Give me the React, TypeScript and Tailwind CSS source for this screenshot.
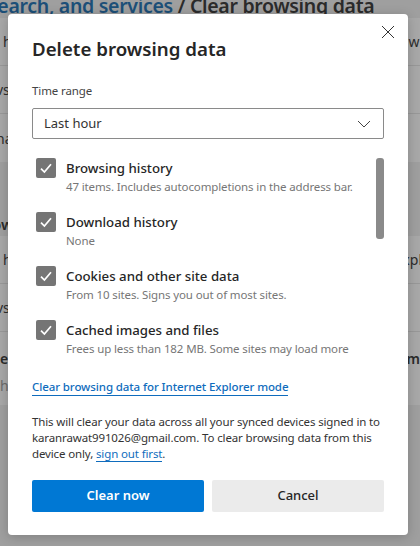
import React from "react";

const font = "font-['Noto_Sans','Open_Sans',sans-serif]";

function Check({ title, sub }: { title: string; sub: string }) {
  return (
    <div className="flex h-[54px] items-start pl-[4px]">
      <div className="mt-[8px] flex h-[20px] w-[20px] items-center justify-center rounded-[2px] bg-[#757575]">
        <svg width="14" height="14" viewBox="0 0 14 14" fill="none">
          <path d="M2 7.6 L5.4 11 L12 3.2" stroke="#fff" strokeWidth="1.7" />
        </svg>
      </div>
      <div className="ml-[10px]">
        <div className="mt-[8px] text-[13.25px] leading-[20px] font-medium text-[#262626]">{title}</div>
        <div className="mt-[1px] whitespace-nowrap text-[11.5px] leading-[16px] tracking-[-0.13px] text-[#767676]">{sub}</div>
      </div>
    </div>
  );
}

function Row({ left, border }: { left: string; border?: boolean }) {
  return (
    <div className={`flex h-[48px] items-center text-[14px] text-[#2c2c2c] ${border ? "border-b border-[#989898]" : ""}`}>
      <span>{left}</span>
    </div>
  );
}

export default function App() {
  return (
    <div className={`relative h-[546px] w-[420px] overflow-hidden bg-[#9f9f9f] ${font}`}>
      <div className="-mt-[10px] -ml-[12px] whitespace-nowrap text-[19.5px] leading-[32px] font-semibold tracking-[-0.3px] text-[#2b2b2b]">
        <span className="text-[#1c4f78]">search, and services</span> / Clear browsing data
      </div>
      <div className="-mt-[4px] bg-[#a8a8a8]">
        <div className="flex h-[48px] items-center justify-between border-b border-[#989898] pl-[3px] text-[14px] text-[#2c2c2c]">
          <span>h</span>
          <span className="-mr-[3px]">wi</span>
        </div>
        <div className="-ml-[4px]">
          <Row left="vs" border />
          <Row left="na" />
        </div>
      </div>
      <div className="mt-[52px] -ml-[8px] text-[15px] leading-[20px] font-semibold text-[#2b2b2b]">ow</div>
      <div className="mt-[2px] bg-[#a8a8a8]">
        <div className="flex h-[48px] items-center justify-between border-b border-[#989898] pl-[3px] text-[14px] text-[#2c2c2c]">
          <span>h</span>
          <span className="-mr-[2px]">xpl</span>
        </div>
        <div className="-ml-[4px]">
          <Row left="vs" border />
        </div>
        <div className="flex h-[73px] flex-col text-[14px]">
          <div className="mt-[16px] flex justify-between font-semibold text-[#2b2b2b]">
            <span>e</span>
            <span>im</span>
          </div>
          <span className="mt-[6px] text-[#6b6b6b]">h</span>
        </div>
      </div>
      <div className="absolute top-[14px] left-[8px] h-[521px] w-[400px] rounded-[4px] bg-white px-[24px] shadow-[0_2px_12px_rgba(0,0,0,0.2)]">
        <button className="absolute top-[11px] right-[13px]">
          <svg width="14" height="14" viewBox="0 0 14 14" stroke="#333" strokeWidth="1" fill="none"><path d="M1 1 L13 13 M13 1 L1 13" /></svg>
        </button>
        <h1 className="pt-[21px] text-[18.7px] leading-[28px] font-semibold text-[#262626]">Delete browsing data</h1>
        <div className="mt-[20px] text-[11.5px] leading-[16px] tracking-[-0.1px] text-[#444]">Time range</div>
        <div className="mt-[9px] flex h-[31px] items-center justify-between rounded-[2px] border border-[#8a8a8a] pt-[1px] pr-[12px] pl-[11px] text-[13px] text-[#333]">
          <span>Last hour</span>
          <svg width="14" height="8" viewBox="0 0 14 8" fill="none" stroke="#444"><path d="M1 1 L7 7 L13 1" /></svg>
        </div>
        <div className="relative mt-[11px] h-[212px] overflow-hidden">
          <Check title="Browsing history" sub="47 items. Includes autocompletions in the address bar." />
          <Check title="Download history" sub="None" />
          <Check title="Cookies and other site data" sub="From 10 sites. Signs you out of most sites." />
          <Check title="Cached images and files" sub="Frees up less than 182 MB. Some sites may load more" />
          <div className="absolute top-[8px] right-0 h-[81px] w-[8px] rounded-[3px] bg-[#8a8a8a]" />
        </div>
        <a className="mt-[17px] inline-block border-b border-[#0f6cbd] text-[11.5px] leading-[16px] font-medium tracking-[-0.1px] text-[#0f6cbd]">Clear browsing data for Internet Explorer mode</a>
        <p className="mt-[17px] text-[11.5px] leading-[16px] tracking-[-0.13px] text-[#333]">
          This will clear your data across all your synced devices signed in to karanrawat991026@gmail.com. To clear browsing data from this device only,{" "}
          <a className="border-b border-[#0f6cbd] text-[#0f6cbd]">sign out first</a>.
        </p>
        <div className="mt-[18px] flex gap-[8px]">
          <button className="h-[32px] flex-1 rounded-[2px] bg-[#0078d4] text-[13px] font-semibold text-white">Clear now</button>
          <button className="h-[32px] flex-1 rounded-[2px] bg-[#ebebeb] text-[13px] font-medium text-[#262626]">Cancel</button>
        </div>
      </div>
    </div>
  );
}
